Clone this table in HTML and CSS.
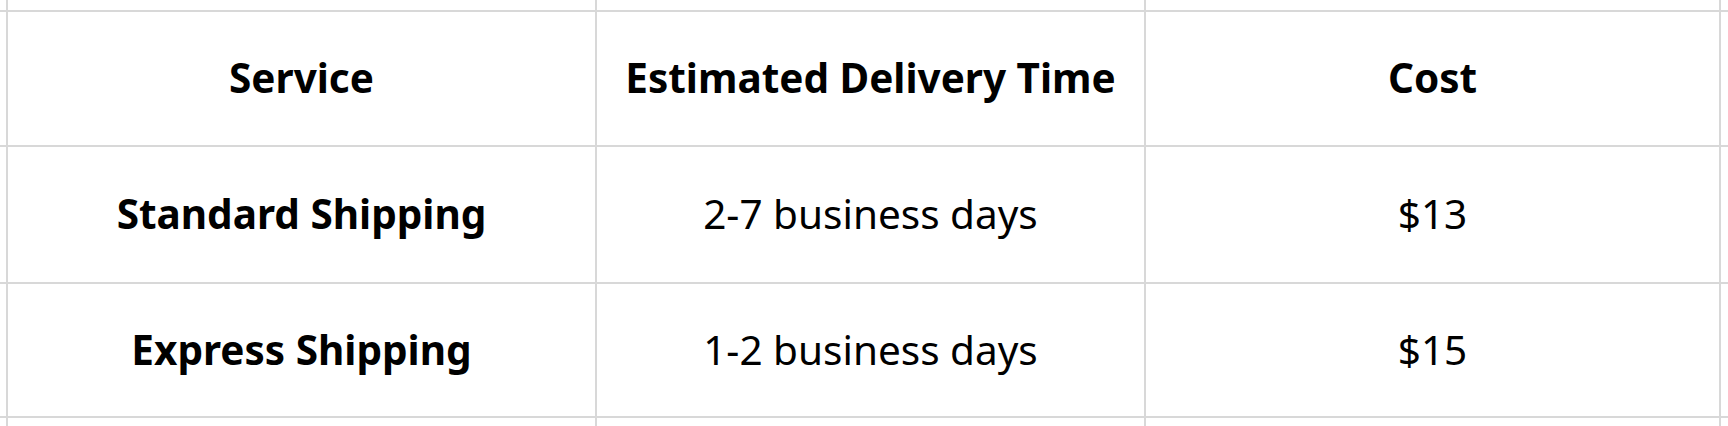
FILE: index.html
```html
<!DOCTYPE html>
<html>
<head>
<meta charset="utf-8">
<link rel="stylesheet" href="styles.css">
</head>
<body>
<div class="frame">
  <div class="table">
    <div class="cell"></div><div class="cell"></div><div class="cell"></div><div class="cell"></div><div class="cell"></div>

    <div class="cell"></div>
    <div class="cell head">Service</div>
    <div class="cell head">Estimated Delivery Time</div>
    <div class="cell head">Cost</div>
    <div class="cell"></div>

    <div class="cell"></div>
    <div class="cell head">Standard Shipping</div>
    <div class="cell">2-7 business days</div>
    <div class="cell">$13</div>
    <div class="cell"></div>

    <div class="cell"></div>
    <div class="cell head">Express Shipping</div>
    <div class="cell">1-2 business days</div>
    <div class="cell">$15</div>
    <div class="cell"></div>

    <div class="cell"></div><div class="cell"></div><div class="cell"></div><div class="cell"></div><div class="cell"></div>
  </div>
</div>
</body>
</html>
```
FILE: styles.css
```css
html, body {
  margin: 0;
  padding: 0;
  background: #ffffff;
}
.frame {
  width: 1728px;
  height: 426px;
  overflow: hidden;
}
.table {
  display: grid;
  grid-template-columns: 106px 587px 547px 573px 100px;
  grid-template-rows: 110px 133px 135px 132px 100px;
  gap: 2px;
  background: #d8d8d8;
  margin: -100px 0 0 -100px;
  width: max-content;
  font-family: "Noto Sans", "Open Sans", sans-serif;
  font-size: 40.5px;
  color: #000000;
}
.cell {
  background: #ffffff;
  display: flex;
  align-items: center;
  justify-content: center;
  padding-bottom: 2px;
  box-sizing: border-box;
  white-space: nowrap;
}
.head {
  font-weight: 700;
}
```
